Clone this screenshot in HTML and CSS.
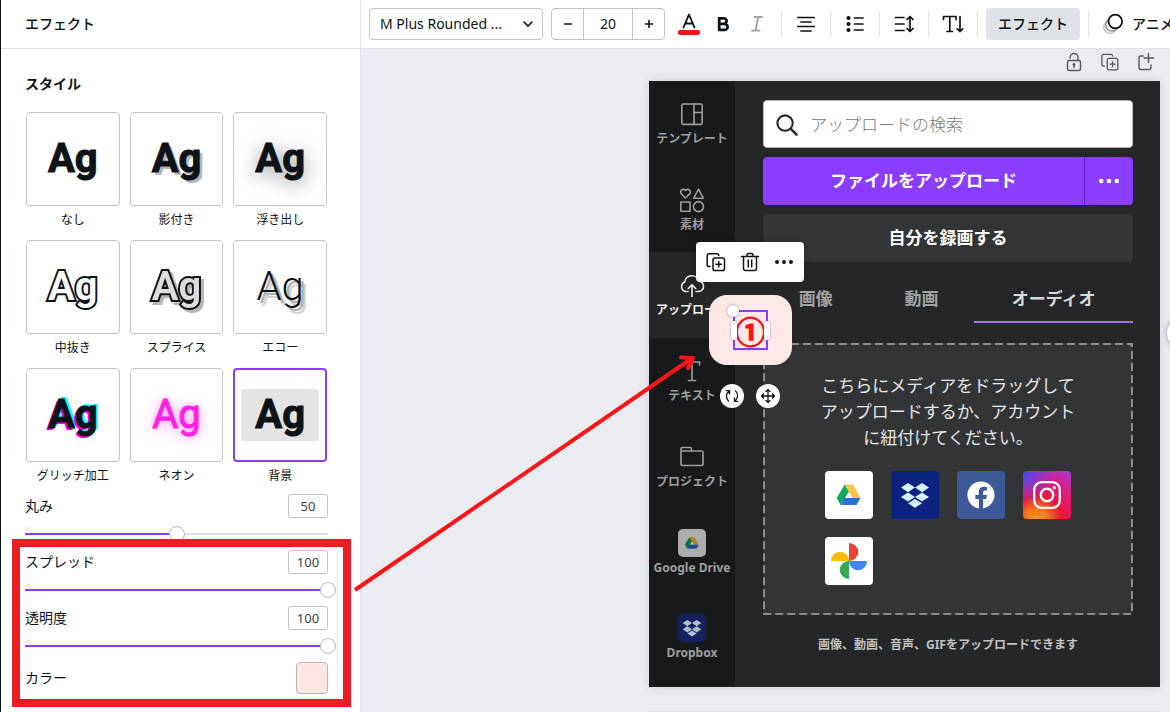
FILE: index.html
```html
<!DOCTYPE html>
<html lang="ja">
<head>
<meta charset="utf-8">
<meta name="viewport" content="width=device-width, initial-scale=1">
<title>エフェクト</title>
<link rel="stylesheet" href="styles.css">
</head>
<body>
<svg class="defs" aria-hidden="true">
  <symbol id="drive" viewBox="0 0 48 48">
    <path fill="#11a861" d="M19.7 13.5 24 20.5 15.6 34 11.7 27z"/>
    <path fill="#f8c544" d="M19.7 13.5H28L35.5 27H27.3z"/>
    <path fill="#2a6fe3" d="M19.4 27H35.5L31.6 34H15.6z"/>
  </symbol>
  <symbol id="dropbox" viewBox="0 0 48 48">
    <path fill="currentColor" d="M17 12l7 4.6-7 4.6-7-4.6zM31 12l7 4.6-7 4.6-7-4.6zM17 21.4l7 4.6-7 4.6-7-4.6zM31 21.4l7 4.6-7 4.6-7-4.6zM24 27.9l7 4.4-7 4.5-7-4.5z"/>
  </symbol>
  <symbol id="duplicate" viewBox="0 0 24 24">
    <path d="M6 16.500H5A1.800 1.800 0 0 1 3.200 14.700V5.500A1.800 1.800 0 0 1 5 3.700H13A1.800 1.800 0 0 1 14.800 5.500"/>
    <rect x="9" y="8" width="11.500" height="12.500" rx="1.800"/>
    <path d="M14.750 11.500v5.500M12 14.250h5.500"/>
  </symbol>
</svg>
<div class="app">
  <aside class="panel">
    <header class="panel-header"><h1>エフェクト</h1></header>
    <div class="panel-body">
      <h2>スタイル</h2>
      <div class="styles">
        <button class="style"><span class="tile"><span class="ag">Ag</span></span><span class="caption">なし</span></button>
        <button class="style"><span class="tile"><span class="ag shadow">Ag</span></span><span class="caption">影付き</span></button>
        <button class="style"><span class="tile"><span class="ag lift">Ag</span></span><span class="caption">浮き出し</span></button>
        <button class="style"><span class="tile"><span class="ag hollow">Ag</span></span><span class="caption">中抜き</span></button>
        <button class="style"><span class="tile"><span class="ag splice">Ag</span></span><span class="caption">スプライス</span></button>
        <button class="style"><span class="tile"><span class="ag echo">Ag</span></span><span class="caption">エコー</span></button>
        <button class="style"><span class="tile"><span class="ag glitch">Ag</span></span><span class="caption">グリッチ加工</span></button>
        <button class="style"><span class="tile"><span class="ag neon">Ag</span></span><span class="caption">ネオン</span></button>
        <button class="style selected" aria-pressed="true"><span class="tile"><span class="ag backed">Ag</span></span><span class="caption">背景</span></button>
      </div>
      <div class="setting">
        <label for="round">丸み</label><input class="number" id="round" type="text" value="50">
        <input class="slider" type="range" min="0" max="100" value="50" aria-label="丸み" style="--value:0.5">
      </div>
      <div class="marked">
        <div class="setting">
          <label for="spread">スプレッド</label><input class="number" id="spread" type="text" value="100">
          <input class="slider" type="range" min="0" max="100" value="100" aria-label="スプレッド" style="--value:1">
        </div>
        <div class="setting">
          <label for="alpha">透明度</label><input class="number" id="alpha" type="text" value="100">
          <input class="slider" type="range" min="0" max="100" value="100" aria-label="透明度" style="--value:1">
        </div>
        <div class="setting color">
          <span>カラー</span><button class="swatch" aria-label="カラー"></button>
        </div>
      </div>
    </div>
  </aside>

  <main class="editor">
    <div class="toolbar">
      <select class="font" aria-label="フォント"><option>M Plus Rounded ...</option></select>
      <div class="stepper">
        <button aria-label="小さく"><svg viewBox="0 0 16 16"><path d="M4.500 8h7"/></svg></button>
        <input type="text" value="20" aria-label="フォントサイズ">
        <button aria-label="大きく"><svg viewBox="0 0 16 16"><path d="M4.500 8h7M8 4.500v7"/></svg></button>
      </div>
      <div class="tools">
        <button class="tool letter" aria-label="テキストカラー"><svg viewBox="0 0 24 24"><path d="M6.500 15.500 12 2.500l5.500 13M8.200 11.500h7.600" stroke-width="1.900"/><rect x="1" y="18" width="22" height="5" rx="2" fill="#fb1018" stroke="none"/></svg></button>
        <button class="tool" aria-label="太字"><svg viewBox="0 0 24 24"><path d="M8.200 6.300h4.600a2.800 2.800 0 0 1 0 5.600H8.200zM8.200 11.900h5.400a3 3 0 0 1 0 6H8.200z" stroke-width="2.800" stroke-linejoin="miter"/></svg></button>
        <button class="tool" aria-label="斜体"><svg class="muted" viewBox="0 0 24 24"><path d="M9.500 5H17M7 18.700h7.500M13.400 5l-3 13.700" stroke-width="1.800"/></svg></button>
      </div>
      <span class="divider"></span>
      <button class="tool" aria-label="配置"><svg viewBox="0 0 24 24"><path d="M3.800 5.500h16.400M7 10h10M3.800 14.500h16.400M7 19h10" stroke-width="1.700"/></svg></button>
      <span class="divider"></span>
      <button class="tool" aria-label="リスト"><svg viewBox="0 0 24 24"><path d="M11.500 6h8.500M11.500 12h8.500M11.500 18h8.500" stroke-width="1.700"/><g fill="currentColor" stroke="none"><circle cx="5.500" cy="6" r="2.100"/><circle cx="5.500" cy="12" r="2.100"/><circle cx="5.500" cy="18" r="2.100"/></g></svg></button>
      <span class="divider"></span>
      <button class="tool" aria-label="スペース"><svg viewBox="0 0 24 24"><path d="M3.500 5.500h8.500M3.500 12h8.500M3.500 18.500h8.500M18 5v14M15 7.500l3-3 3 3M15 16.500l3 3 3-3" stroke-width="1.700"/></svg></button>
      <span class="divider"></span>
      <button class="tool" aria-label="縦書き"><svg viewBox="0 0 24 24"><path d="M2.500 7.500V4.500h12.500v3M8.800 4.500v15M6 19.500h5.500M19 4.500v15M16.300 16.800l2.700 2.700 2.700-2.700" stroke-width="1.700"/></svg></button>
      <span class="divider"></span>
      <button class="text-tool active">エフェクト</button>
      <span class="divider"></span>
      <button class="text-tool animate"><svg viewBox="0 0 24 24"><circle cx="7.800" cy="15.300" r="6" stroke="#c0c2c4"/><circle cx="10" cy="12.800" r="6.300" stroke="#8d9093" fill="#fff"/><circle cx="13.300" cy="9.500" r="6.800" stroke-width="1.800" fill="#fff"/></svg>アニメート</button>
    </div>

    <div class="workspace">
      <div class="page-tools">
        <button aria-label="ロック"><svg viewBox="0 0 24 24"><rect x="5.500" y="10.500" width="13" height="10" rx="1.500"/><path d="M8 8V7.500a4 4 0 0 1 8 0V10.500M12 14.500v3"/><circle cx="12" cy="14.500" r=".8"/></svg></button>
        <button aria-label="ページを複製"><svg viewBox="-1 -1 26 26"><use href="#duplicate" width="24" height="24"/></svg></button>
        <button aria-label="ページを追加"><svg viewBox="0 0 24 24"><path d="M9 6H7A2 2 0 0 0 5 8v9.500a2 2 0 0 0 2 2h8a2 2 0 0 0 2-2V15M14.500 3.500v9M10 8h9.500"/></svg></button>
      </div>

      <div class="canvas">
        <nav class="side">
          <a href="#"><svg viewBox="0 0 28 28"><rect x="3.800" y="4" width="20.400" height="20.400" rx="1.500"/><path d="M16 4v20.400M16 12.500h8.200"/></svg>テンプレート</a>
          <a href="#"><svg viewBox="0 0 28 28"><path d="M7.500 12 3.200 7.700a2.700 2.700 0 0 1 4.300-3.300 2.700 2.700 0 0 1 4.300 3.300zM20.500 3.200l4.700 9h-9.400z"/><rect x="2.800" y="16" width="9.200" height="9.200"/><circle cx="20.500" cy="20.600" r="5"/></svg>素材</a>
          <a href="#" class="current"><svg viewBox="0 0 28 28"><path d="M10 20.500H7.500A5 5 0 0 1 6.700 11 7.300 7.300 0 0 1 21 10.200a5.200 5.200 0 0 1 0 10.300h-3M14 25.500V14M10.300 17.500 14 13.800l3.700 3.700"/></svg>アップロード</a>
          <a href="#"><svg viewBox="0 0 28 28"><path d="M6.500 8V5h15v3M14 5v18.500M10.500 23.500h7"/></svg>テキスト</a>
          <a href="#"><svg viewBox="0 0 28 28"><path d="M3 9V6A1.500 1.500 0 0 1 4.500 4.500H12A1.500 1.500 0 0 1 13.500 6V8M3 8h20.500A1.500 1.500 0 0 1 25 9.500v11.500a1.500 1.500 0 0 1-1.500 1.500h-19A1.500 1.500 0 0 1 3 21z"/></svg>プロジェクト</a>
          <a href="#"><svg class="brand dim-drive" viewBox="0 0 48 48"><use href="#drive"/></svg>Google Drive</a>
          <a href="#"><svg class="brand dim-dropbox" viewBox="3 3 42 42"><use href="#dropbox" width="48" height="48"/></svg>Dropbox</a>
        </nav>
        <section class="uploads">
          <div class="search">
            <svg viewBox="0 0 24 24"><circle cx="10.500" cy="10.500" r="8"/><path d="m16.500 16.500 6 6" stroke-width="2.600"/></svg>
            <input type="text" placeholder="アップロードの検索" aria-label="アップロードの検索">
          </div>
          <div class="upload">
            <button class="upload-main">ファイルをアップロード</button>
            <button class="upload-more" aria-label="その他"><svg viewBox="0 0 24 24"><circle cx="3.500" cy="12" r="2.500"/><circle cx="12" cy="12" r="2.500"/><circle cx="20.500" cy="12" r="2.500"/></svg></button>
          </div>
          <button class="record">自分を録画する</button>
          <div class="tabs">
            <button>画像</button><button>動画</button><button class="on">オーディオ</button>
          </div>
          <div class="drop">
            <svg class="dashes" aria-hidden="true"><rect x="0" y="0" width="100%" height="100%" rx="4"/></svg>
            <p>こちらにメディアをドラッグして<br>アップロードするか、アカウント<br>に紐付けてください。</p>
            <div class="sources">
              <button class="white" aria-label="Google Drive"><svg viewBox="0 0 48 48"><use href="#drive"/></svg></button>
              <button class="navy" aria-label="Dropbox"><svg viewBox="0 0 48 48"><use href="#dropbox"/></svg></button>
              <button class="blue" aria-label="Facebook"><svg viewBox="0 0 48 48"><path fill="#fff" transform="translate(10.400 10.400) scale(1.130)" d="M24 12.073c0-6.627-5.373-12-12-12s-12 5.373-12 12c0 5.990 4.388 10.954 10.125 11.854v-8.385H7.078v-3.470h3.047V9.430c0-3.007 1.792-4.669 4.533-4.669 1.312 0 2.686.235 2.686.235v2.953H15.830c-1.491 0-1.956.925-1.956 1.874v2.250h3.328l-.532 3.470h-2.796v8.385C19.612 23.027 24 18.062 24 12.073z"/></svg></button>
              <button class="insta" aria-label="Instagram"><svg viewBox="0 0 48 48" fill="none" stroke="#fff"><rect x="11.200" y="11.200" width="25.600" height="25.600" rx="7.500" stroke-width="2.300"/><circle cx="24" cy="24" r="6.200" stroke-width="2.500"/><circle cx="31.300" cy="16.700" r="1.600" fill="#fff" stroke="none"/></svg></button>
              <button class="white" aria-label="Google Photos"><svg viewBox="0 0 48 48"><path fill="#ea4335" d="M24 6a9.300 9 0 0 1 0 18z"/><path fill="#4285f4" d="M24 24h18a9 9.300 0 0 1-18 0z"/><path fill="#34a853" d="M24 24v18a9.300 9 0 0 1 0-18z"/><path fill="#fbbc05" d="M24 24H6a9 9.300 0 0 1 18 0z"/></svg></button>
            </div>
          </div>
          <p class="note">画像、動画、音声、GIFをアップロードできます</p>
        </section>

        <div class="context">
          <button aria-label="複製"><svg viewBox="0 0 24 24"><use href="#duplicate"/></svg></button>
          <button aria-label="削除"><svg viewBox="0 0 24 24"><path d="M3.500 6.500h17M9 6.300V5a1.500 1.500 0 0 1 1.500-1.500h3A1.500 1.500 0 0 1 15 5v1.300M5.500 6.500v12a2 2 0 0 0 2 2h9a2 2 0 0 0 2-2v-12M10.300 10v7M13.700 10v7"/></svg></button>
          <button aria-label="その他"><svg viewBox="0 0 24 24"><g fill="currentColor" stroke="none"><circle cx="5" cy="12" r="2"/><circle cx="12" cy="12" r="2"/><circle cx="19" cy="12" r="2"/></g></svg></button>
        </div>
        <div class="badge">
          <div class="frame">①<i class="handle corner"></i><i class="handle west"></i><i class="handle east"></i></div>
        </div>
        <div class="grips">
          <button aria-label="回転"><svg viewBox="0 0 24 24"><path d="M8.500 17A6.300 6.300 0 0 1 9.300 7M6.300 6.700H9.500V10M15.500 7A6.300 6.300 0 0 1 14.700 17M17.700 17.300H14.500V14"/></svg></button>
          <button aria-label="移動"><svg viewBox="0 0 24 24"><path d="M12 5.500v13M5.500 12h13M10 7.500l2-2 2 2M10 16.500l2 2 2-2M7.500 10l-2 2 2 2M16.500 10l2 2-2 2"/></svg></button>
        </div>
      </div>
      <div class="next-page"></div>
      <span class="edge-button"></span>
    </div>
  </main>
  <svg class="arrow" viewBox="0 0 345 240" aria-hidden="true"><path d="M2 236 338 5"/><path class="head" d="M328 3.500 340 4 335 14"/></svg>
</div>
</body>
</html>
```
FILE: styles.css
```css
* { box-sizing: border-box; }

body {
  margin: 0;
  color: #0e1318;
  font: 14px/20px "Noto Sans", "Noto Sans CJK JP", sans-serif;
}

button, input, select { font: inherit; color: inherit; }
button { padding: 0; border: 0; background: none; cursor: pointer; }
h1, h2, p { margin: 0; }
svg { display: block; fill: none; stroke: currentColor; stroke-linecap: round; stroke-linejoin: round; }
.defs { position: absolute; width: 0; height: 0; }

.app {
  position: relative;
  display: flex;
  height: 100vh;
  overflow: hidden;
}

/* Effects panel */
.panel {
  flex: none;
  width: 361px;
  border-left: 1px solid #0e1318;
  border-right: 1px solid #dfe2e6;
  background: #fff;
}
.panel-header { padding: 14px 24px; border-bottom: 1px solid #dfe2e6; }
.panel h1, .panel h2 { font-size: 14px; line-height: 20px; font-weight: 500; }
.panel h2 { font-weight: 700; }
.panel-body { padding: 25px 32px 0 24px; }

.styles {
  display: grid;
  grid-template-columns: repeat(3, 1fr);
  gap: 10px;
  margin: 18px 0 8px;
  padding: 0 1px;
}
.style { display: flex; flex-direction: column; align-items: stretch; }
.tile {
  display: flex;
  align-items: center;
  justify-content: center;
  height: 94px;
  border: 1px solid #c2c4c9;
  border-radius: 4px;
}
.selected .tile { border: 2px solid #8b3dff; }
.caption { padding-top: 4px; font-size: 12px; line-height: 20px; }

.ag {
  font: 700 40px/52px Roboto, sans-serif;
  -webkit-text-stroke: 1px #0e1318;
}
.shadow { text-shadow: 3px 3px 0 #b4b6b8; }
.lift { text-shadow: 0 4px 20px rgba(20, 25, 35, 0.5); }
.hollow, .splice {
  color: #fff;
  font-weight: 600;
  -webkit-text-stroke: 4px #0e1318;
  paint-order: stroke fill;
}
.splice {
  color: #ddd;
  text-shadow: none;
  filter: drop-shadow(3px 3px 0 #b7b7b7);
}
.echo {
  font-weight: 300;
  -webkit-text-stroke: 0;
  text-shadow: 3px 3px 0 #b0b0b0, 5px 6px 0 #d4d4d4;
}
.glitch { text-shadow: -2px 2px 0 #f0f, 2px -2px 0 #0ff; }
.neon {
  color: #fb22e4;
  font-weight: 400;
  -webkit-text-stroke: 1px #fb22e4;
  text-shadow: 0 0 5px #fb9df2, 0 2px 16px #fb8cf0;
}
.backed { padding: 0 14px; border-radius: 3px; background: #e4e4e4; }

.setting {
  display: grid;
  grid-template-columns: 1fr auto;
  align-items: center;
  row-gap: 8px;
  margin-bottom: 8px;
}
.number {
  width: 40px;
  height: 24px;
  padding: 0;
  border: 1px solid #c2c4c9;
  border-radius: 3px;
  color: #3c4146;
  font-size: 13px;
  text-align: center;
}
.slider {
  grid-column: 1 / -1;
  width: calc(100% + 16px);
  height: 16px;
  margin: 0 -8px;
  appearance: none;
  background:
    linear-gradient(#8b3dff, #8b3dff) 8px center / calc((100% - 16px) * var(--value)) 2px no-repeat,
    linear-gradient(#dfe3e7, #dfe3e7) 8px center / calc(100% - 16px) 2px no-repeat,
    radial-gradient(circle at 10px 3px, #f1f1f1 2px, transparent 3px);
}
.slider::-webkit-slider-thumb {
  appearance: none;
  width: 16px;
  height: 16px;
  border: 1px solid #b9bbbf;
  border-radius: 50%;
  background: #fff;
}
.swatch {
  width: 32px;
  height: 32px;
  border: 1px solid #b9b3b5;
  border-radius: 4px;
  background: #ffe7e6;
}
.marked { position: relative; }
.marked::after {
  content: "";
  position: absolute;
  inset: -11px -23px -13px -13px;
  border: 8px solid #ec1c24;
  pointer-events: none;
}

/* Toolbar */
.editor { flex: 1; min-width: 0; display: flex; flex-direction: column; }
.toolbar {
  display: flex;
  align-items: center;
  gap: 8px;
  height: 49px;
  padding: 0 8px;
  overflow: hidden;
  border-bottom: 1px solid #dfe2e6;
  background: #fff;
}
.toolbar > * { flex: none; }
.font {
  width: 174px;
  height: 32px;
  padding: 0 10px;
  border: 1px solid #c0c3c8;
  border-radius: 4px;
  appearance: none;
  background: #fff url("data:image/svg+xml,%3Csvg xmlns='http://www.w3.org/2000/svg' width='12' height='8'%3E%3Cpath d='M2 2l4 4 4-4' fill='none' stroke='%230e1318' stroke-width='1.600' stroke-linecap='round'/%3E%3C/svg%3E") right 8px center no-repeat;
}
.stepper {
  display: flex;
  width: 114px;
  height: 32px;
  border: 1px solid #c0c3c8;
  border-radius: 4px;
}
.stepper button { display: grid; place-items: center; width: 31px; }
.stepper svg { width: 16px; height: 16px; stroke-width: 1.6; }
.stepper input {
  flex: 1;
  min-width: 0;
  padding: 0;
  border: solid #c0c3c8;
  border-width: 0 1px;
  text-align: center;
}
.tools { display: flex; gap: 2px; }
.tool { display: grid; place-items: center; width: 32px; height: 32px; }
.tool svg { width: 24px; height: 24px; }
.muted { color: #9fa1a3; }
.divider { width: 1px; height: 24px; background: #dfe2e6; }
.text-tool { display: flex; align-items: center; gap: 6px; height: 32px; font-weight: 500; }
.active { padding: 0 12px; border-radius: 4px; background: #dfe3e7; }
.animate { padding-left: 5px; }
.animate svg { width: 24px; height: 24px; stroke-width: 1.5; }

/* Workspace */
.workspace {
  position: relative;
  flex: 1;
  overflow: hidden;
  background: #ebecf0;
}
.page-tools {
  display: flex;
  justify-content: flex-end;
  gap: 12px;
  padding: 1px 12px 7px;
  color: #55585c;
}
.page-tools svg { width: 24px; height: 24px; stroke-width: 1.4; }

.canvas {
  position: relative;
  display: flex;
  margin: 0 10px 0 288px;
  color: #f0f0f0;
  background: #252627;
  box-shadow: 0 0 10px rgba(40, 45, 70, 0.12);
}
.next-page { margin: 24px 10px 0 288px; height: 40px; background: #dfe1e5; }
.side {
  display: grid;
  grid-template-rows: repeat(7, 1fr);
  width: 86px;
  padding-bottom: 6px;
  background: #18191b;
}
.side a {
  display: flex;
  flex-direction: column;
  align-items: center;
  gap: 3px;
  padding-top: 19px;
  color: #9c9d9e;
  font-size: 12px;
  line-height: 16px;
  font-weight: 700;
  text-decoration: none;
  white-space: nowrap;
}
.side svg { width: 28px; height: 28px; stroke-width: 1.6; }
.side .current { color: #eee; background: #252627; }
.brand { border-radius: 5px; }
.side .brand, .sources svg { stroke: none; }
.dim-drive { background: #fff; filter: brightness(0.68); }
.dim-dropbox { color: #aebfd0; background: #15205f; }

.uploads { flex: 1; min-width: 0; padding: 19px 27px 32px 28px; font-size: 17px; }
.search {
  display: flex;
  align-items: center;
  gap: 12px;
  height: 48px;
  padding: 0 11px;
  border: 1px solid #b5b7ba;
  border-radius: 4px;
  color: #252627;
  background: #fff;
}
.search svg { flex: none; width: 23px; height: 23px; stroke-width: 2.2; }
.search input { flex: 1; min-width: 0; height: 40px; padding: 0; border: 0; outline: 0; background: none; font-weight: 300; }
.search input::placeholder { color: #77797b; opacity: 1; }
.upload { display: flex; margin: 9px 0; height: 48px; font-weight: 700; color: #fff; }
.upload-main { flex: 1; border-radius: 4px 0 0 4px; background: #8b3dff; }
.upload-more {
  display: grid;
  place-items: center;
  width: 49px;
  border-left: 1px solid #6420c8;
  border-radius: 0 4px 4px 0;
  background: #8b3dff;
}
.upload-more svg { width: 22px; height: 22px; fill: #fff; stroke: none; }
.record { width: 100%; height: 48px; border-radius: 4px; color: #fff; background: #333436; font-weight: 700; }
.tabs { display: grid; grid-template-columns: 2fr 2fr 3fr; margin-top: 13px; color: #a2a3a4; font-weight: 700; }
.tabs button { height: 48px; }
.tabs .on { color: #d8d9da; border-bottom: 2px solid #9a72ee; padding-top: 2px; }
.drop {
  position: relative;
  display: flex;
  flex-direction: column;
  align-items: center;
  margin-top: 20px;
  padding: 30px 20px;
  border-radius: 4px;
  background: #333436;
}
.dashes { position: absolute; inset: 0; width: 100%; height: 100%; }
.dashes rect { stroke: #8a8b8c; stroke-width: 4; stroke-dasharray: 8 4; stroke-linecap: butt; }
.drop p { line-height: 26px; text-align: center; white-space: nowrap; color: #e6e6e6; }
.sources { display: grid; grid-template-columns: repeat(4, 48px); gap: 18px; margin-top: 20px; }
.sources button { border-radius: 4px; overflow: hidden; }
.sources svg { width: 48px; height: 48px; }
.sources .insta svg { stroke: #fff; }
.white { background: #fff; }
.navy { color: #d6f2ff; background: #0c2281; }
.blue { background: #3d5a98; }
.insta {
  background:
    radial-gradient(circle at 0 0, #3a4bf0 0, rgba(120, 60, 220, 0.7) 25%, transparent 50%),
    radial-gradient(circle at 28% 105%, #fba21b 0, #f7761a 20%, #ee1438 42%, #e01a80 68%, #a03cd0 100%);
}
.note { margin-top: 20px; font-size: 12px; font-weight: 700; line-height: 20px; text-align: center; color: #c0c1c2; white-space: nowrap; }

/* Selected element and its controls */
.context {
  position: absolute;
  left: 47px;
  top: 161px;
  display: flex;
  padding: 0 3px;
  border-radius: 4px;
  color: #0e1318;
  background: #fff;
  box-shadow: 0 0 8px rgba(0, 0, 0, 0.2);
}
.context button { display: grid; place-items: center; width: 34px; height: 40px; }
.context svg { width: 24px; height: 24px; stroke-width: 1.5; }
.badge {
  position: absolute;
  left: 60px;
  top: 214px;
  display: grid;
  place-items: center;
  width: 83px;
  height: 70px;
  border-radius: 18px;
  background: #ffe8e7;
}
.frame {
  position: relative;
  display: flex;
  align-items: center;
  justify-content: center;
  width: 35px;
  height: 40px;
  border: 2px solid #8b3dff;
  color: #fb1018;
  font: 700 30px/36px "Noto Sans CJK JP", sans-serif;
  -webkit-text-stroke: 1px #fb1018;
}
.handle {
  position: absolute;
  border-radius: 6px;
  background: #fff;
  box-shadow: 0 0 2px rgba(50, 30, 80, 0.6);
}
.corner { left: -8px; top: -7px; width: 12px; height: 12px; }
.west, .east { top: 9px; width: 6px; height: 19px; }
.west { left: -4px; }
.east { right: -4px; }
.grips { position: absolute; left: 71px; top: 303px; display: flex; gap: 12px; }
.grips button { width: 24px; height: 24px; border-radius: 50%; color: #0e1318; background: #fff; }
.grips svg { width: 24px; height: 24px; stroke-width: 1.3; }

.arrow {
  position: absolute;
  left: 353px;
  top: 354px;
  width: 345px;
  height: 240px;
  color: #fb1518;
  stroke-width: 4;
  stroke-linecap: butt;
  pointer-events: none;
}
.head { stroke-linecap: round; }
.edge-button {
  position: absolute;
  right: -29px;
  top: 268px;
  width: 32px;
  height: 32px;
  border-radius: 50%;
  background: #fff;
  box-shadow: 0 0 5px rgba(40, 45, 70, 0.4);
}
```
